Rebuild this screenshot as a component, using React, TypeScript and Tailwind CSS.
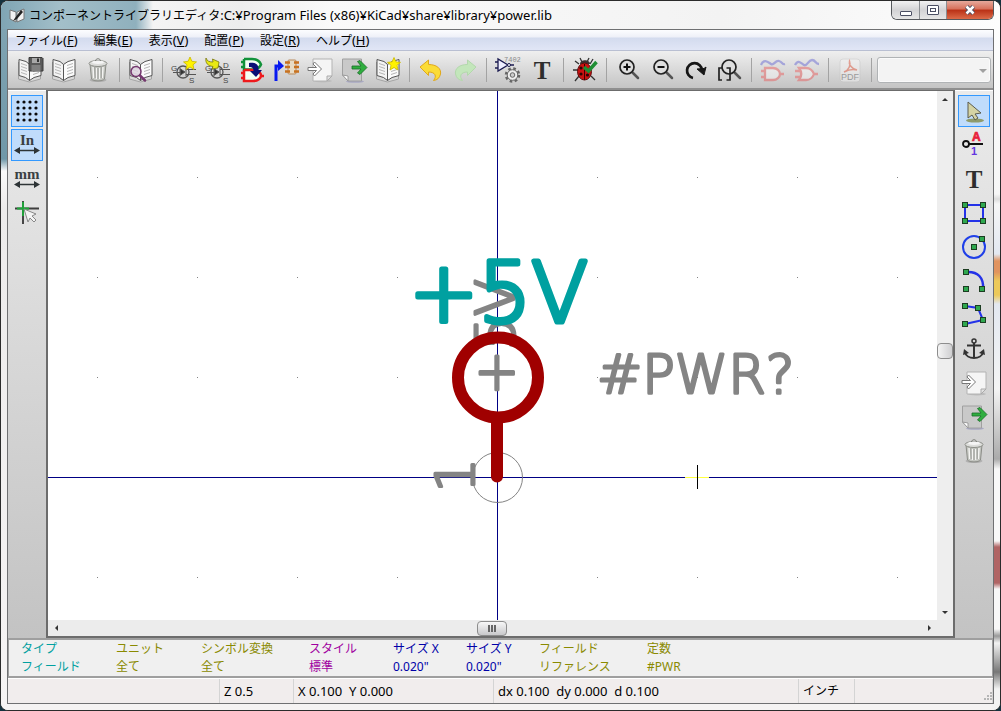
import type { ReactNode } from 'react';

function Icon({ children, faded = false }: { children: ReactNode; faded?: boolean }) {
  return (
    <svg viewBox="0 0 26 26" aria-hidden="true" className={faded ? 'size-[26px] shrink-0 overflow-visible opacity-40' : 'size-[26px] shrink-0 overflow-visible'}>
      {children}
    </svg>
  );
}

function Book() {
  return (
    <g strokeLinejoin="round">
      <path d="M1.5 5v17l11 3 11-3V5" fill="#d9d9d9" stroke="#a5a5a5" />
      <path d="M2 2.500l7 2 3.500 3v16l-4-3-6.500-2z" fill="#f4f4f4" stroke="#555" />
      <path d="M24 2.500l-7 2-4.500 3v16l4.500-3 7-2z" fill="#fbfbfb" stroke="#555" />
      <path d="M4 6.500l6 2M4 9.500l6 2M4 12.500l6 2M4 15.500l6 2M22 6.500l-6 2M22 9.500l-6 2M22 12.500l-6 2M22 15.500l-6 2" stroke="#b5b5b5" fill="none" />
    </g>
  );
}

function Star({ x, y }: { x: number; y: number }) {
  return (
    <path
      transform={`translate(${x} ${y})`}
      d="M0-6.500l1.900 4.300 4.600.6-3.500 2.900 1 4.700L0 3.500-4 6l1-4.700-3.500-2.900 4.600-.6z"
      fill="#fff200"
      stroke="#c9b800"
      strokeWidth=".8"
    />
  );
}

function Trash() {
  return (
    <g>
      <ellipse cx="13" cy="23" rx="8.500" ry="2" fill="#b0b0b0" />
      <path d="M5 7l1.500 15c2 2.500 11 2.500 13 0L21 7z" fill="#c3c5c0" stroke="#8b8d87" />
      <path d="M8 10l.7 11M11.500 11v11M14.500 11v11M18 10l-.7 11" stroke="#f4f4f2" strokeWidth="1.400" />
      <path d="M9.800 10l.3 11M13 11v11M16.200 10v11" stroke="#989a95" />
      <ellipse cx="13" cy="6.500" rx="9" ry="3" fill="#dcddda" stroke="#8c8e88" />
      <ellipse cx="13" cy="5.300" rx="6" ry="1.700" fill="#f5f5f5" />
      <path d="M10.500 4c0-3 5-3 5 0" fill="none" stroke="#7c7e78" />
    </g>
  );
}

function Transistor() {
  return (
    <g stroke="#555" fill="none">
      <circle cx="12" cy="15" r="6" strokeWidth="1.300" />
      <path d="M2 15.500h7M9 11v8M15 11v8M15 12.500h10M15 17.500h10" />
      <path d="M9.500 12l4.500 3-4.500 3z" fill="#333" />
      <g fill="#444" stroke="none" fontFamily="Liberation Sans" fontSize="8">
        <text x="0" y="14">G</text>
        <text x="18" y="26">S</text>
      </g>
    </g>
  );
}

function ImportSheet() {
  return (
    <g strokeLinejoin="round">
      <ellipse cx="16" cy="24" rx="9" ry="1.500" fill="#bcbcbc" />
      <path d="M6 2h19v17l-5 5H6z" fill="#f5f5f5" stroke="#b3b3b3" />
      <path d="M25 19h-5v5z" fill="#e2e2e2" stroke="#aaa" />
      <path d="M1 10.500h8.500L6 7l1.500-2 7 7-7 7L6 17l3.500-3.500H1z" fill="#fff" stroke="#777" />
    </g>
  );
}

function ExportSheet() {
  return (
    <g strokeLinejoin="round">
      <ellipse cx="14" cy="24.500" rx="9" ry="1.300" fill="#a9a9c4" />
      <path d="M1.500 2h19v22H7l-5.500-6z" fill="#c9c9c9" stroke="#a0a0a0" />
      <path d="M1.500 18l5.500 1v5z" fill="#fff" stroke="#999" />
      <path d="M11 9h9l-3.500-4.500 2.500-1 7 7-7 7-2.500-1.500L20 12h-9z" fill="#2fae3f" stroke="#1b6d28" strokeWidth=".8" />
    </g>
  );
}

function Undo() {
  return (
    <path
      d="M2 10l8.500-7v4.500c8 0 13 4 12 9.500-1 4-3 6-7 6.500 3.500-4 2-8.500-5-8.500v3.500z"
      fill="#fbdc36"
      stroke="#e0a81c"
      strokeLinejoin="round"
    />
  );
}

function Lens() {
  return (
    <g fill="none">
      <path d="M17.500 15.500l5.500 5.500" stroke="#555" strokeWidth="2.500" strokeLinecap="round" />
      <circle cx="12" cy="10" r="7" fill="#dedede" stroke="#222" strokeWidth="1.700" />
    </g>
  );
}

function Serif({ children }: { children: string }) {
  return (
    <text x="13" y="22" textAnchor="middle" fontFamily="Liberation Serif" fontWeight="bold" fontSize="25" fill="#2e2e2e">
      {children}
    </text>
  );
}

function UnitIcon({ unit }: { unit: string }) {
  return (
    <Icon>
      <text x="13" y="13" textAnchor="middle" fontFamily="Liberation Serif" fontWeight="bold" fontSize="15" fill="#3a3f42">
        {unit}
      </text>
      <path d="M3 18.500h20" stroke="#2e3436" strokeWidth="1.500" />
      <path d="M0 18.500l6-3.500v7zM26 18.500l-6-3.500v7z" fill="#2e3436" />
    </Icon>
  );
}

function Node({ x, y }: { x: number; y: number }) {
  return <rect x={x - 2.5} y={y - 2.5} width="5" height="5" fill="#2fa84f" stroke="#1c3d22" />;
}

type Tool = { label: string; icon: ReactNode; active?: boolean; disabled?: boolean };

const topGroups: Tool[][] = [
  [
    {
      label: 'ライブラリを保存',
      icon: (
        <Icon>
          <Book />
          <path d="M12 0.500h13l1 1v12.500H12z" fill="#5a5a5a" stroke="#3a3a3a" />
          <rect x="15" y="1" width="8" height="5" fill="#a7a7a7" />
          <rect x="14.500" y="8" width="9" height="6" fill="#808080" />
          <rect x="20" y="1.500" width="2" height="3.500" fill="#333" />
        </Icon>
      ),
    },
    { label: 'ライブラリを選択', icon: <Icon><Book /></Icon> },
    { label: 'コンポーネントを削除', icon: <Icon><Trash /></Icon> },
  ],
  [
    {
      label: 'ライブラリブラウザ',
      icon: (
        <Icon>
          <Book />
          <circle cx="8" cy="14.500" r="5" fill="#ddd3e0" fillOpacity=".8" stroke="#75386f" strokeWidth="1.500" />
          <path d="M12 18.500l5 5" stroke="#75386f" strokeWidth="2.500" strokeLinecap="round" />
        </Icon>
      ),
    },
  ],
  [
    { label: '新規コンポーネント', icon: <Icon><Transistor /><Star x={19} y={6.5} /></Icon> },
    {
      label: 'コンポーネントを読み込み',
      icon: (
        <Icon>
          <Transistor />
          <text x="18" y="11" fontFamily="Liberation Sans" fontSize="8" fill="#444">D</text>
          <path d="M1 1c1 3 3 4 7 4l-.5-3L14 5l-1 6-6 1 1-2.500C3 9 0 6 1 1z" fill="#e9e913" stroke="#77760c" strokeWidth=".8" />
        </Icon>
      ),
    },
    {
      label: '新規コンポーネントを作成',
      icon: (
        <Icon>
          <g fill="#f5fff5" strokeWidth="2.500">
            <path d="M5 2h8c6 0 8 3 9 5.500-1 2.500-4 5-9 5H5V2M2 5h3M2 10h3" stroke="#12923a" />
            <path d="M5 13h9c5 0 8 3 8 5.500s-3 5.500-8 5.500H5V13M2 16h3M2 21h3M22 19h3" stroke="#ee1a1d" />
          </g>
          <path d="M10 6c7-1 10 2 9.500 7h3.500L17 20l-6-6h3.500c0-3-1-4-4.500-4z" fill="#0b0f76" />
        </Icon>
      ),
    },
    {
      label: 'コンポーネントを更新',
      icon: (
        <Icon>
          <path d="M3 24V9h5" fill="none" stroke="#0719f0" strokeWidth="3" />
          <path d="M5 3l6 6-6 5z" fill="#0719f0" />
          <rect x="15" y="3" width="8" height="14" rx="1" fill="#e8dcc5" stroke="#b98b5c" />
          <path d="M12 5.500h5M12 10h5M12 14.500h5M21 5.500h5M21 10h5M21 14.500h5" stroke="#c8721f" strokeWidth="2.500" />
        </Icon>
      ),
    },
    { label: 'インポート', icon: <Icon><ImportSheet /></Icon> },
    { label: 'エクスポート', icon: <Icon><ExportSheet /></Icon> },
    { label: '新規ライブラリ', icon: <Icon><Book /><Star x={19} y={7} /></Icon> },
  ],
  [
    { label: '元に戻す', icon: <Icon><Undo /></Icon> },
    {
      label: 'やり直し',
      disabled: true,
      icon: (
        <Icon>
          <path d="M24 10l-8.500-7v4.500c-8 0-13 4-12 9.500 1 4 3 6 7 6.500-3.500-4-2-8.500 5-8.500v3.500z" fill="#c3e6bb" stroke="#b3d8ac" strokeLinejoin="round" />
        </Icon>
      ),
    },
  ],
  [
    {
      label: 'プロパティ',
      icon: (
        <Icon>
          <path d="M3 2v12l10-6zM0 5h3M0 11h3M15 8h4" fill="#eef" stroke="#1b1b50" strokeWidth="1.300" />
          <circle cx="14" cy="8" r="1.500" fill="#fff" stroke="#1b1b50" />
          <text x="9" y="5" fontFamily="Liberation Mono" fontSize="7" fill="#8a8a8a">7402</text>
          <circle cx="17.500" cy="18" r="6.500" fill="none" stroke="#666" strokeWidth="2.500" strokeDasharray="2.600 2.500" />
          <circle cx="17.500" cy="18" r="5.300" fill="#eee" stroke="#666" />
          <circle cx="17.500" cy="18" r="2.300" fill="#ccc" stroke="#666" />
        </Icon>
      ),
    },
    { label: 'フィールド', icon: <Icon><Serif>T</Serif></Icon> },
  ],
  [
    {
      label: 'エラーチェック',
      icon: (
        <Icon>
          <path d="M7 7L3 4M6 13H1M7 19l-4 5M18 7l3-5M19 19l4 4M10 5L8 1M15 5l2-4" stroke="#333" strokeWidth="1.300" />
          <path d="M8 7c0-5 10-5 10 0z" fill="#3a3030" />
          <ellipse cx="12.500" cy="14.500" rx="7" ry="8.500" fill="#cc1111" stroke="#5e0d0d" />
          <path d="M12.500 7v16" stroke="#400" />
          <g fill="#2a0505">
            <circle cx="9" cy="11" r="1.600" />
            <circle cx="9" cy="17" r="1.600" />
            <circle cx="15.500" cy="18" r="1.600" />
          </g>
          <path d="M12 10l4.500 4 8-9" fill="none" stroke="#1f8f35" strokeWidth="3.500" />
        </Icon>
      ),
    },
  ],
  [
    { label: 'ズームイン', icon: <Icon><Lens /><path d="M8.500 10h7M12 6.500v7" stroke="#111" strokeWidth="2" /></Icon> },
    { label: 'ズームアウト', icon: <Icon><Lens /><path d="M8.500 10h7" stroke="#111" strokeWidth="2" /></Icon> },
    {
      label: '再描画',
      icon: (
        <Icon>
          <path d="M10 21a7.500 7.500 0 1 1 9-8" fill="none" stroke="#161616" strokeWidth="2.700" />
          <path d="M14 12l7-.5 2-1.500-2 8z" fill="#161616" stroke="#161616" />
        </Icon>
      ),
    },
    {
      label: '自動ズーム',
      icon: (
        <Icon>
          <Lens />
          <path d="M5 11H2v12h3M9.500 11H13v12H9.500" fill="none" stroke="#222" strokeWidth="1.700" />
        </Icon>
      ),
    },
  ],
  [
    {
      label: '標準表示',
      disabled: true,
      icon: (
        <Icon faded>
          <path d="M1 8c3-7 7-3 10-1s4-4 8-3 3 4 6 3" fill="none" stroke="#4d4dd0" strokeWidth="2.300" />
          <path d="M5 11h8c4 0 7 3 7 6s-3 6-7 6H5zM1 14h4M1 20h4M20 17h4" fill="#fff" stroke="#ee4444" strokeWidth="2.300" />
        </Icon>
      ),
    },
    {
      label: 'ド・モルガン表示',
      disabled: true,
      icon: (
        <Icon faded>
          <path d="M1 8c3-6 6-2 9 0s4-5 8-5 3 4 7 4" fill="none" stroke="#4d4dd0" strokeWidth="2.300" />
          <path d="M5 11h7c4 0 7 3 8 6-1 3-4 6-8 6H5c3-4 3-8 0-12zM1 14h5M1 20h5M20 17h4" fill="#fff" stroke="#ee4444" strokeWidth="2.300" />
        </Icon>
      ),
    },
  ],
  [
    {
      label: 'データシート',
      disabled: true,
      icon: (
        <Icon faded>
          <rect x="3" y="2" width="20" height="23" rx="3" fill="#fafafa" stroke="#c4c4c4" />
          <path d="M7 15c5-2 7-7 5.500-11-1 3 2 8 7.500 9-4-1-9 0-13 2z" fill="none" stroke="#e33b1b" strokeWidth="1.500" />
          <text x="13" y="23" textAnchor="middle" fontFamily="Liberation Sans" fontSize="9" fill="#444">PDF</text>
        </Icon>
      ),
    },
  ],
];

const leftTools: Tool[] = [
  {
    label: 'グリッド',
    active: true,
    icon: (
      <Icon>
        <g fill="#0a0a0a">
          {[4, 10, 16, 22].map((y) => [4, 10, 16, 22].map((x) => <circle key={`${x}-${y}`} cx={x} cy={y} r="1.600" />))}
        </g>
      </Icon>
    ),
  },
  { label: 'インチ', active: true, icon: <UnitIcon unit="In" /> },
  { label: 'ミリ', icon: <UnitIcon unit="mm" /> },
  {
    label: 'カーソル形状',
    icon: (
      <Icon>
        <path d="M1 8.500h24M9 1v23" stroke="#3d3d3d" strokeWidth="1.900" />
        <path d="M3 8.500h12M9 2v14" stroke="#1fa53a" strokeWidth="1.900" />
        <path d="M10 9l12 5-4 2 4 4-2 2-4-4-2 4z" fill="#f4f4f4" stroke="#888" />
      </Icon>
    ),
  },
];

const rightTools: Tool[] = [
  {
    label: '選択',
    active: true,
    icon: (
      <Icon>
        <ellipse cx="14" cy="22.500" rx="9" ry="2" fill="#8f9b6b" />
        <path d="M7 4v16l4-3 3 5 3-2-3-4 6-1z" fill="#d4d3a4" stroke="#5b5b4c" strokeLinejoin="round" />
      </Icon>
    ),
  },
  {
    label: 'ピン',
    icon: (
      <Icon>
        <path d="M7 12h15" stroke="#111" strokeWidth="2" />
        <circle cx="5" cy="12" r="3" fill="#e6e6e6" stroke="#111" strokeWidth="1.800" />
        <text x="11" y="9" fontFamily="Liberation Sans" fontWeight="bold" fontSize="12" fill="#e8203a" stroke="#e8203a" strokeWidth=".7">A</text>
        <text x="10" y="23" fontFamily="Liberation Sans" fontWeight="bold" fontSize="11" fill="#6436e0">1</text>
      </Icon>
    ),
  },
  { label: 'テキスト', icon: <Icon><Serif>T</Serif></Icon> },
  {
    label: '矩形',
    icon: (
      <Icon>
        <rect x="4" y="5" width="18" height="16" fill="none" stroke="#2432e8" strokeWidth="2" />
        <Node x={4} y={5} /><Node x={22} y={5} /><Node x={4} y={21} /><Node x={22} y={21} />
      </Icon>
    ),
  },
  {
    label: '円',
    icon: (
      <Icon>
        <circle cx="13" cy="13" r="11" fill="none" stroke="#2040e8" strokeWidth="2" />
        <Node x={13} y={13} /><Node x={21} y={5} />
      </Icon>
    ),
  },
  {
    label: '円弧',
    icon: (
      <Icon>
        <path d="M5 4c12-1 18 6 17 17" fill="none" stroke="#2432e8" strokeWidth="2.500" />
        <Node x={5} y={4} /><Node x={5} y={21} /><Node x={21} y={21} />
      </Icon>
    ),
  },
  {
    label: 'ポリゴン',
    icon: (
      <Icon>
        <path d="M4 4l13 2 5 12-18 4" fill="none" stroke="#2432e8" strokeWidth="2" />
        <Node x={4} y={4} /><Node x={17} y={6} /><Node x={22} y={18} /><Node x={4} y={22} />
      </Icon>
    ),
  },
  {
    label: 'アンカー',
    icon: (
      <Icon>
        <g fill="none" stroke="#333" strokeWidth="2">
          <circle cx="13" cy="5" r="2" strokeWidth="1.500" />
          <path d="M13 7v15M6 9.500h14M4 16c1 8 17 8 18 0" />
        </g>
        <path d="M2 19l1-6 5 4zM24 19l-1-6-5 4z" fill="#333" />
      </Icon>
    ),
  },
  { label: '図形をインポート', icon: <Icon><ImportSheet /></Icon> },
  { label: '図形をエクスポート', icon: <Icon><ExportSheet /></Icon> },
  { label: '削除', icon: <Icon><Trash /></Icon> },
];

const menus = [
  ['ファイル', 'F'],
  ['編集', 'E'],
  ['表示', 'V'],
  ['配置', 'P'],
  ['設定', 'R'],
  ['ヘルプ', 'H'],
];

const info = [
  { label: 'タイプ', value: 'フィールド', tone: 'text-[#00a0a0]' },
  { label: 'ユニット', value: '全て', tone: 'text-[#8a8a00]' },
  { label: 'シンボル変換', value: '全て', tone: 'text-[#8a8a00]' },
  { label: 'スタイル', value: '標準', tone: 'text-[#a000a0]' },
  { label: 'サイズ X', value: '0.020"', tone: 'text-[#0000a8]' },
  { label: 'サイズ Y', value: '0.020"', tone: 'text-[#0000a8]' },
  { label: 'フィールド', value: 'リファレンス', tone: 'text-[#8a8a00]' },
  { label: '定数', value: '#PWR', tone: 'text-[#8a8a00]' },
];

function SideBar({ tools, label }: { tools: Tool[]; label: string }) {
  return (
    <div role="toolbar" aria-label={label} className="flex w-[38px] shrink-0 flex-col items-center gap-0.5 border-t border-white bg-gradient-to-b from-[#ebebeb] to-[#c3c3c3] pt-1">
      {tools.map((tool) => (
        <button
          key={tool.label}
          aria-label={tool.label}
          className={
            tool.active
              ? 'flex size-8 items-center justify-center border border-[#3399ff] bg-[#c0dcfb]'
              : 'flex size-8 items-center justify-center'
          }
        >
          {tool.icon}
        </button>
      ))}
    </div>
  );
}

function Drawing() {
  const columns = [97, 197, 297, 397, 597, 697, 797, 897];
  const rows = [177, 277, 377, 577];
  return (
    <svg viewBox="48 91 889 530" preserveAspectRatio="xMidYMid slice" className="absolute inset-0 size-full bg-white" role="img" aria-label="+5V">
      <g fill="#848484" shapeRendering="crispEdges">
        {rows.map((y) => columns.map((x) => <rect key={`${x}-${y}`} x={x} y={y} width="1" height="1" />))}
      </g>
      <g fill="#000084" shapeRendering="crispEdges">
        <rect x="497" y="-400" width="1" height="1600" />
        <rect x="-1200" y="477" width="3600" height="1" />
      </g>
      <g shapeRendering="crispEdges">
        <rect x="685" y="477" width="24" height="1" fill="#ffff40" />
        <rect x="697" y="465" width="1" height="24" fill="#000" />
      </g>
      <circle cx="497.500" cy="478" r="25" fill="none" stroke="#848484" />
      <g fontFamily="DejaVu Sans" fontWeight="200" strokeLinejoin="round">
        <g fill="#848484" stroke="#848484" strokeWidth="3">
          <text transform="translate(514 396) rotate(-90)" fontSize="54">+5V</text>
          <text transform="translate(474 493) rotate(-90)" fontSize="54">1</text>
          <text x="597" y="393" fontSize="54">#PWR?</text>
        </g>
        <text x="409" y="322" fontSize="83" fill="#00a0a0" stroke="#00a0a0" strokeWidth="5">+5V</text>
      </g>
      <g fill="none" stroke="#a00000" strokeWidth="12" strokeLinecap="round">
        <circle cx="498" cy="378" r="40" />
        <path d="M497 422v55" />
      </g>
    </svg>
  );
}

const arrowButton = 'flex size-4 shrink-0 items-center justify-center text-[#333]';

export default function App() {
  return (
    <div className="flex h-screen flex-col overflow-hidden bg-[#14323f] font-['Noto_Sans','Noto_Sans_CJK_JP',sans-serif] text-xs text-black">
      <div className="flex min-h-0 flex-1 flex-col overflow-hidden rounded-lg border border-[#2b2b2b] bg-[#f5f3f3]">
        <header className="flex h-7 shrink-0 items-start bg-[linear-gradient(to_right,#7fa5b4_0px,#a3bfc9_60px,#8fb0bd_135px,#f4f4f4_152px,#ededed_240px,#fafafa_330px,#f3f3f3_720px,#fdfdfd_100%)]">
          <div className="flex h-7 min-w-0 flex-1 items-center gap-1 pl-2">
            <svg viewBox="0 0 16 16" aria-hidden="true" className="size-4 shrink-0">
              <path d="M1 3l6 2v10l-6-3zM15 2L8 5v10l7-3z" fill="#f2f2f2" stroke="#777" />
              <path d="M12 3l-6 8-2 3 4-2 6-7z" fill="#222" />
            </svg>
            <h1 className="truncate leading-5">
              コンポーネントライブラリエディタ
              <span className="text-[13px]">:C:¥Program Files (x86)¥KiCad¥share¥library¥power.lib</span>
            </h1>
          </div>
          <div className="mr-1.5 flex h-[19px] overflow-hidden rounded-b-md border border-t-0 border-[#55585c]">
            <button aria-label="最小化" className="flex w-7 items-center justify-center border-r border-[#8b8e92] bg-gradient-to-b from-[#f2f2f2] via-[#d3d3d5] to-[#e6e6e6] pt-1.5">
              <span className="h-[5px] w-3 rounded-[1px] border border-[#4b4f63] bg-white" />
            </button>
            <button aria-label="最大化" className="flex w-[27px] items-center justify-center border-r border-[#8b8e92] bg-gradient-to-b from-[#f2f2f2] via-[#d3d3d5] to-[#e6e6e6]">
              <span className="flex h-[10px] w-3 items-center justify-center rounded-[1px] border border-[#4b4f63] bg-white">
                <span className="h-1 w-1.5 border border-[#4b4f63]" />
              </span>
            </button>
            <button aria-label="閉じる" className="flex w-[46px] items-center justify-center bg-[linear-gradient(#e6a99c,#d7705a_45%,#b93016_50%,#dc6b48)]">
              <svg viewBox="0 0 12 12" aria-hidden="true" className="size-3">
                <path d="M2.500 2.500l7 7M9.500 2.500l-7 7" stroke="#4b4f63" strokeWidth="4.500" />
                <path d="M2.500 2.500l7 7M9.500 2.500l-7 7" stroke="#fff" strokeWidth="2.500" />
              </svg>
            </button>
          </div>
        </header>

        <div className="flex min-h-0 flex-1 bg-[linear-gradient(to_bottom,#fdfdfd_0,#f6f6f6_165px,#dcdcdc_170px,#f6f6f6_175px,#e3e8f0_225px,#e0935f_232px,#e0935f_243px,#ecc95a_252px,#ecc95a_266px,#e3e8f0_275px,#f4f4f4_360px,#aaa_430px,#f8f8f8_440px,#f8f8f8_512px,#b06464_518px,#b06464_554px,#f8f8f8_560px,#f8f8f8_600px,#999_607px,#f2f2f2_614px,#777_643px,#f2f2f2_660px)] bg-[length:8px_100%] bg-right bg-no-repeat">
          <div className="flex min-h-0 min-w-0 flex-1 bg-[linear-gradient(to_bottom,#7fa3b2_0,#6f98a8_130px,#fafafa_142px,#ecebeb_180px,#f6f4f4_100%)] bg-[length:8px_100%] bg-no-repeat px-1.5 pb-1.5">
            <div className="flex min-h-0 min-w-0 flex-1 flex-col border border-[#6f7072]">
              <nav className="flex h-[21px] shrink-0 items-center gap-4 border-b border-[#b9bfd2] bg-[linear-gradient(#fcfdff_0,#eef0f8_35%,#d3dbee_40%,#e1e6f6_100%)] pl-[7px]">
                {menus.map(([name, key]) => (
                  <button key={name} className="whitespace-nowrap leading-5">
                    {name}
                    <span className="text-[13px]">
                      (<span className="underline">{key}</span>)
                    </span>
                  </button>
                ))}
              </nav>

              <div role="toolbar" aria-label="メインツールバー" className="flex h-[37px] shrink-0 items-center bg-gradient-to-b from-[#efefef] to-[#c4c4c4] pl-[5px]">
                {topGroups.map((group, index) => (
                  <div key={index} className="flex items-center">
                    {group.map((tool) => (
                      <button key={tool.label} aria-label={tool.label} disabled={tool.disabled} className="flex h-8 w-[34px] items-center justify-center">
                        {tool.icon}
                      </button>
                    ))}
                    <span className="mx-1 h-6 w-px bg-[#a3a3a3]" />
                  </div>
                ))}
                <div className="relative ml-px h-[26px] w-[114px]">
                  <select disabled aria-label="パート" className="size-full appearance-none rounded-[3px] border border-[#b0b3b5] bg-[#f3f3f3] shadow-[inset_0_0_0_1px_#fafafa]">
                    <option></option>
                  </select>
                  <span className="pointer-events-none absolute top-3 right-1 border-x-4 border-t-4 border-x-transparent border-t-[#a0a0a0]" />
                </div>
              </div>

              <div className="flex min-h-0 flex-1 border-t-2 border-[#8f8f8f]">
                <SideBar tools={leftTools} label="表示" />
                <main className="flex min-w-0 flex-1 flex-col border-2 border-t border-[#6c6c6c]">
                  <div className="flex min-h-0 flex-1">
                    <div className="relative min-w-0 flex-1">
                      <Drawing />
                    </div>
                    <div className="flex w-4 shrink-0 flex-col items-center bg-[#eeeeee]">
                      <button aria-label="上へ" className={arrowButton}>
                        <span className="border-x-[3px] border-b-[3px] border-x-transparent border-b-[#333]" />
                      </button>
                      <div className="flex-[236]" />
                      <div className="h-4 w-4 rounded-sm border border-[#8d8d8d] bg-gradient-to-r from-[#f5f5f5] to-[#cfcfd1]" />
                      <div className="flex-[245]" />
                      <button aria-label="下へ" className={arrowButton}>
                        <span className="border-x-[3px] border-t-[3px] border-x-transparent border-t-[#333]" />
                      </button>
                    </div>
                  </div>
                  <div className="flex h-4 shrink-0 items-center bg-[#ececec] pr-4">
                    <button aria-label="左へ" className={arrowButton}>
                      <span className="border-y-[3px] border-r-[3px] border-y-transparent border-r-[#333]" />
                    </button>
                    <div className="flex-[413]" />
                    <div className="flex h-[15px] w-[30px] items-center justify-center gap-px rounded-sm border border-[#8d8d8d] bg-gradient-to-b from-[#f7f7f7] to-[#c9c9cb]">
                      <span className="h-[7px] w-0.5 bg-[#666]" />
                      <span className="h-[7px] w-0.5 bg-[#666]" />
                      <span className="h-[7px] w-0.5 bg-[#666]" />
                    </div>
                    <div className="flex-[414]" />
                    <button aria-label="右へ" className={arrowButton}>
                      <span className="border-y-[3px] border-l-[3px] border-y-transparent border-l-[#333]" />
                    </button>
                  </div>
                </main>
                <SideBar tools={rightTools} label="編集" />
              </div>

              <dl className="grid h-10 shrink-0 grid-cols-[95px_85px_108px_84px_73px_73px_108px_1fr] border-2 border-r border-l border-[#9f9f9f] bg-[#f0f0f0] pl-3">
                {info.map((item, index) => (
                  <div key={index} className={item.tone}>
                    <dt className="leading-[18px] whitespace-nowrap">{item.label}</dt>
                    <dd className="leading-[18px] whitespace-nowrap">{item.value}</dd>
                  </div>
                ))}
              </dl>

              <footer className="grid h-[25px] shrink-0 grid-cols-[212px_74px_200px_1fr_56px_138px] border-t border-white bg-[#f1eded] text-[13px] leading-6 whitespace-pre *:border-r *:border-[#d4d4d4] *:pl-1">
                <span />
                <span>Z 0.5</span>
                <span>{'X 0.100  Y 0.000'}</span>
                <span>{'dx 0.100  dy 0.000  d 0.100'}</span>
                <span className="text-xs leading-6">インチ</span>
                <span className="flex items-end justify-end pb-0.5">
                  <svg viewBox="0 0 9 9" aria-hidden="true" className="size-[9px]" fill="#b5b5b5">
                    <path d="M7 0h2v2H7zM7 3h2v2H7zM7 6h2v2H7zM4 3h2v2H4zM4 6h2v2H4zM1 6h2v2H1z" />
                  </svg>
                </span>
              </footer>
            </div>
          </div>
        </div>
      </div>
    </div>
  );
}
